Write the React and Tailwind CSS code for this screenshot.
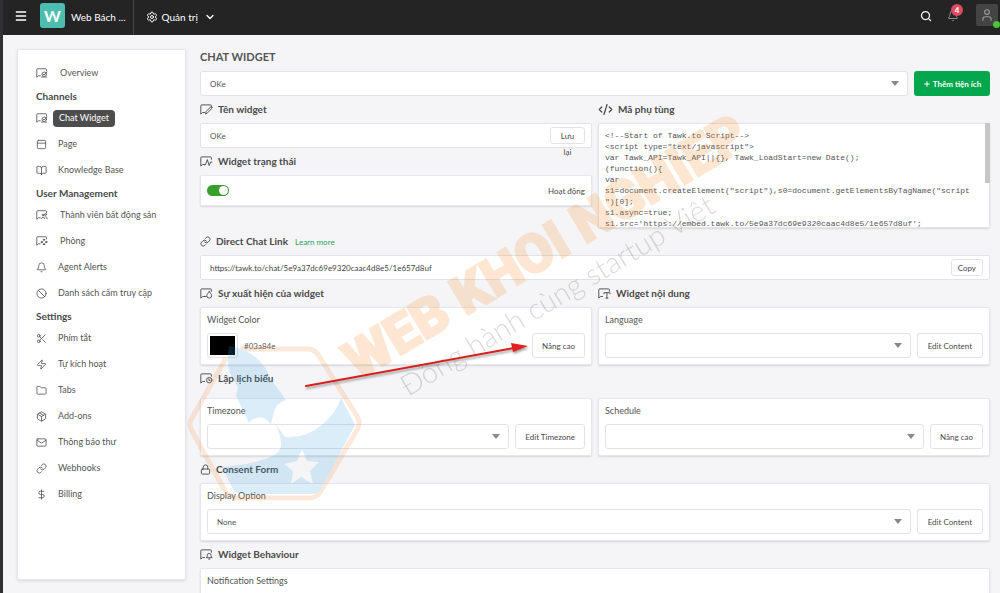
import { useState } from 'react'
import {
  Menu, Settings, ChevronDown, Search, Bell, User, PanelTop, BookOpen, Ban,
  Scissors, Zap, Folder, Package, Mail, Link, DollarSign, Lock, CodeXml, Plus,
} from 'lucide-react'

const SCRIPT = `<!--Start of Tawk.to Script-->
<script type="text/javascript">
var Tawk_API=Tawk_API||{}, Tawk_LoadStart=new Date();
(function(){
var s1=document.createElement("script"),s0=document.getElementsByTagName("script")[0];
s1.async=true;
s1.src='https://embed.tawk.to/5e9a37dc69e9320caac4d8e5/1e657d8uf';
s1.charset='UTF-8';
s1.setAttribute('crossorigin','*');
s0.parentNode.insertBefore(s1,s0);
})();
</script>
<!--End of Tawk.to Script-->`

// Chat bubble outline, the small glyph goes in its lower right corner
function BubbleIcon({ children, small }) {
  return (
    <svg
      viewBox="0 0 24 20"
      className={small ? 'w-3 h-[10px] shrink-0' : 'w-[13px] h-[11px] shrink-0'}
      fill="none"
      stroke="currentColor"
      strokeWidth="1.700"
      strokeLinejoin="round"
      strokeLinecap="round"
    >
      <path d="M21 6V3a1.500 1.500 0 0 0-1.500-1.500H3A1.500 1.500 0 0 0 1.500 3v15.500L5 15.500h3.500" />
      {children}
    </svg>
  )
}

const EyeGlyph = () => (
  <>
    <circle cx="16.500" cy="12.500" r="4.500" />
    <path d="M14.500 12.500l1.500 1.500 6-6M11 18h10" />
  </>
)
const PeopleGlyph = () => (
  <>
    <circle cx="14" cy="10" r="1.800" />
    <circle cx="19" cy="9" r="1.800" />
    <path d="M10.500 17c.5-3 6.500-3 7 0M18 13.500c2-.5 4 .5 4.500 4" />
  </>
)
const NodesGlyph = () => (
  <>
    <circle cx="16" cy="7.500" r="1.300" fill="currentColor" />
    <circle cx="11.500" cy="12" r="1.300" fill="currentColor" />
    <circle cx="20.500" cy="12" r="1.300" fill="currentColor" />
    <circle cx="16" cy="16.500" r="1.300" fill="currentColor" />
  </>
)
const PencilGlyph = () => <path d="M10.500 17.500l1-4L20.500 4.500l2.500 2.500-9 9z" />
const PulseGlyph = () => <path d="M8 16h2l3.500-9.500 3.500 11 2.500-6.500H22" />
const DropGlyph = () => <path d="M17 6.500c2 3 4.500 5 4.500 7.500a4.500 4.500 0 0 1-9 0c0-2.500 2.500-4.500 4.500-7.500zM8 15.500h3" />
const TextGlyph = () => <path d="M11 10.500V8.500h11v2M16.500 8.500v10M14.500 18.500h4" />
const ClockGlyph = () => (
  <>
    <circle cx="17" cy="13" r="5" />
    <path d="M16.500 10.500V13.500h2" />
  </>
)
const BellGlyph = () => <path d="M12 15.500c1.500-1 1.500-2.500 1.500-4a3.500 3.500 0 0 1 7 0c0 1.500 0 3 1.500 4zM16 18.500h2" />

const NAV = [
  { label: 'Overview', glyph: EyeGlyph },
  { heading: 'Channels' },
  { label: 'Chat Widget', glyph: EyeGlyph, active: true },
  { label: 'Page', icon: PanelTop },
  { label: 'Knowledge Base', icon: BookOpen },
  { heading: 'User Management' },
  { label: 'Thành viên bất động sản', glyph: PeopleGlyph },
  { label: 'Phòng', glyph: NodesGlyph },
  { label: 'Agent Alerts', icon: Bell },
  { label: 'Danh sách cấm truy cập', icon: Ban },
  { heading: 'Settings' },
  { label: 'Phím tắt', icon: Scissors },
  { label: 'Tự kích hoạt', icon: Zap },
  { label: 'Tabs', icon: Folder },
  { label: 'Add-ons', icon: Package },
  { label: 'Thông báo thư', icon: Mail },
  { label: 'Webhooks', icon: Link },
  { label: 'Billing', icon: DollarSign },
]

function NavItem({ item }) {
  if (item.heading) {
    return <li className="h-[19px] pt-0.5 flex items-center text-[10px] font-bold text-[#4a4a4a]">{item.heading}</li>
  }
  const Icon = item.icon
  const Glyph = item.glyph
  return (
    <li>
      <a href="#" className="h-[26px] flex items-center text-[9px] text-[#555]">
        <span className="w-[22px] shrink-0">
          {Icon ? <Icon size={11} strokeWidth={1.800} /> : <BubbleIcon small><Glyph /></BubbleIcon>}
        </span>
        {item.active ? (
          <span className="-ml-[5px] px-1.5 h-[17px] flex items-center rounded bg-[#4d4d4d] text-white">{item.label}</span>
        ) : (
          <span className={Glyph ? 'pl-0.5' : ''}>{item.label}</span>
        )}
      </a>
    </li>
  )
}

function SectionTitle({ icon, children, extra, className = '' }) {
  return (
    <div className={`h-[27px] flex items-center text-[#4a4a4a] ${className}`}>
      {icon}
      <h2 className="ml-[5px] text-[10px] font-bold">{children}</h2>
      {extra}
    </div>
  )
}

function Card({ children, className = '' }) {
  return (
    <div className={`bg-white rounded-xs border border-[#e6e7ec] shadow-[0_1px_2px_rgba(0,0,0,0.12)] ${className}`}>
      {children}
    </div>
  )
}

function Select({ id, value = '', label }) {
  return (
    <div className="relative flex-1 min-w-0">
      <select
        id={id}
        aria-label={label}
        className="block w-full h-[25px] pl-[9px] pr-6 appearance-none bg-white border border-[#e2e3e8] rounded-[3px] text-[8px] text-[#555]"
      >
        <option>{value}</option>
      </select>
      <svg viewBox="0 0 8 5" className="absolute right-[9px] top-[10px] w-2 h-[5px] pointer-events-none" fill="#8a8a8a">
        <path d="M0 0h8L4 5z" />
      </svg>
    </div>
  )
}

function OutlineButton({ children, className = 'h-[25px] px-2.5' }) {
  return (
    <button className={`shrink-0 bg-white border border-[#e2e3e8] rounded-[3px] text-[8px] text-[#4a4a4a] ${className}`}>
      {children}
    </button>
  )
}

function FieldCard({ id, label, value, button, buttonClass }) {
  return (
    <Card className="p-1.5">
      <label htmlFor={id} className="block mb-[7px] text-[9px] leading-3 text-[#555]">{label}</label>
      <div className="flex gap-1.5">
        <Select id={id} value={value} />
        <OutlineButton className={buttonClass}>{button}</OutlineButton>
      </div>
    </Card>
  )
}

function Header() {
  return (
    <header className="h-[35px] shrink-0 flex bg-[#242424] text-white">
      <button aria-label="Menu" className="ml-[11px] w-[26px] h-8 flex items-center">
        <Menu size={14} strokeWidth={2.500} />
      </button>
      <div className="mt-[3px] w-[25px] h-[25px] flex items-center justify-center rounded-[3px] bg-[#4dbdb0] text-base font-bold">W</div>
      <div className="ml-1.5 pr-[7px] h-full flex items-center pb-px border-r border-[#454545] text-[10px]">Web Bách ...</div>
      <button className="ml-3 h-8 pt-0.5 flex items-center gap-1 text-[10px]">
        <Settings size={12} strokeWidth={2} />
        Quản trị
        <ChevronDown size={12} strokeWidth={2.500} className="ml-0.5" />
      </button>
      <div className="ml-auto pr-0.5 flex">
        <button aria-label="Search" className="h-8 flex items-center mr-[15px]">
          <Search size={12} strokeWidth={2.500} />
        </button>
        <button aria-label="Notifications" className="relative h-8 flex items-center mr-[17px] text-[#8c8c8c]">
          <Bell size={12} strokeWidth={2} />
          <span className="absolute top-1 -right-1 w-3 h-3 flex items-center justify-center rounded-full bg-[#e04a5f] text-[8px] font-bold text-white">4</span>
        </button>
        <button aria-label="Profile" className="relative mt-1 w-[22px] h-[22px] flex items-center justify-center rounded-xs bg-[#444] text-[#999]">
          <User size={14} strokeWidth={2} />
          <span className="absolute -right-0.5 -bottom-0.5 w-[7px] h-[7px] rounded-full bg-[#4cc33a]" />
        </button>
      </div>
    </header>
  )
}

function Watermark() {
  return (
    <svg className="absolute left-[177px] top-[90px] w-[590px] h-[430px] pointer-events-none" viewBox="178 90 590 430" aria-hidden="true">
      {/* Badge */}
      <g opacity="0.19">
        <path
          d="M238 349h68q7 0 11 7l38 60q4 7 0 14l-36 61q-4 7-12 7h-73q-7 0-11-7l-33-60q-4-7 0-13l34-60"
          fill="none" stroke="#f08a3c" strokeWidth="5" strokeLinejoin="round"
        />
        <path
          fill="#3a9fe0"
          d="M227 346Q258 351 268 378L284 400Q274 403 272 412L269 424L262 418Q252 416 247 423L234 396L236 387Q222 370 227 346z"
        />
        <path
          fill="#3a9fe0"
          fillRule="evenodd"
          d="M273 424l10 13q20 2 38-13 13-11 18-26l14 27-34 64q-3 5-9 5h-70q-6 0-9-5l-11-22q27-2 43-8 16-5 16-14 0-11-6-21zM300 449l-5 12-13 3 9 7-2 13 10-7 12 7-3-13 9-9-12-1z"
        />
      </g>
      <text
        transform="translate(356 381) rotate(-31)"
        className="font-['Liberation_Sans_Narrow','Roboto',sans-serif] font-black text-[54px]"
        fill="#f5923a"
        stroke="#f5923a"
        strokeWidth="2"
        opacity="0.22"
      >
        WEB KHOI NGHIEP
      </text>
      <text
        transform="translate(406 397) rotate(-31)"
        className="font-['Lato',sans-serif] font-light text-[29px]"
        fill="#555"
        fillOpacity="0.22"
      >
        Đồng hành cùng startup Việt
      </text>
    </svg>
  )
}

function Arrow() {
  return (
    <svg
      className="absolute left-[295px] top-[335px] w-[235px] h-[60px] pointer-events-none drop-shadow-[1px_2px_1px_rgba(0,0,0,0.35)]"
      viewBox="298 335 235 60"
      aria-hidden="true"
    >
      <path d="M306 386L514 348" stroke="#d8201c" strokeWidth="2" strokeLinecap="round" />
      <path d="M528 346l-17-3 2 9z" fill="#e0201c" />
    </svg>
  )
}

export default function App() {
  const [enabled, setEnabled] = useState(true)

  return (
    <div className="relative h-screen overflow-hidden flex flex-col bg-[#f5f5f8] border-l-[3px] border-[#303036] font-['Lato',sans-serif]">
      <Header />

      <div className="flex-1 min-h-0 flex pl-3.5 pr-2.5 gap-3.5">
        {/* Sidebar */}
        <nav className="w-[169px] shrink-0 mt-3.5 mb-[13px] pl-[18px] pt-2.5 bg-white rounded-xs border border-[#e6e7ec] shadow-[0_1px_3px_rgba(0,0,0,0.12)]">
          <ul>
            {NAV.map(item => <NavItem key={item.label || item.heading} item={item} />)}
          </ul>
        </nav>

        {/* Content */}
        <main className="flex-1 min-w-0">
          <h1 className="mt-3.5 mb-1.5 text-[11px] leading-4 font-bold text-[#555]">CHAT WIDGET</h1>
          <div className="flex gap-1.5">
            <Select label="Widget" value="OKe" />
            <button className="shrink-0 w-[76px] h-[25px] flex items-center justify-center gap-0.5 rounded-[3px] bg-[#03a84e] text-[8px] font-bold text-white">
              <Plus size={8} strokeWidth={3} />
              Thêm tiện ích
            </button>
          </div>

          <div className="grid grid-cols-2 gap-x-1.5">
            <div>
              <SectionTitle icon={<BubbleIcon><PencilGlyph /></BubbleIcon>}>Tên widget</SectionTitle>
              <div className="h-[25px] flex pr-1.5 bg-white border border-[#e2e3e8] rounded-xs">
                <input aria-label="Tên widget" defaultValue="OKe" className="flex-1 min-w-0 pl-[9px] text-[8px] text-[#555]" />
                <OutlineButton className="mt-[3px] w-[35px] h-[17px] px-2 flex items-start justify-center leading-4">Lưu lại</OutlineButton>
              </div>
              <SectionTitle icon={<BubbleIcon><PulseGlyph /></BubbleIcon>}>Widget trạng thái</SectionTitle>
              <Card className="h-[31px] px-1.5 flex items-center justify-between">
                <input
                  id="status"
                  type="checkbox"
                  role="switch"
                  checked={enabled}
                  onChange={e => setEnabled(e.target.checked)}
                  className="appearance-none w-[22px] h-[11px] p-px flex rounded-full bg-[#b5b5b5] checked:bg-[#37a02c] checked:justify-end before:block before:w-[9px] before:h-[9px] before:rounded-full before:bg-white"
                />
                <label htmlFor="status" className="text-[8px] text-[#4a4a4a]">Hoạt động</label>
              </Card>
            </div>
            <div>
              <SectionTitle icon={<CodeXml size={15} strokeWidth={2} />}>Mã phụ tùng</SectionTitle>
              <div className="relative">
                <textarea
                  readOnly
                  aria-label="Mã phụ tùng"
                  value={SCRIPT}
                  className="block w-full h-[105px] pl-1.5 pr-[18px] pt-1.5 resize-none [scrollbar-width:none] bg-white border border-[#e2e3e8] rounded-xs shadow-[0_1px_2px_rgba(0,0,0,0.12)] font-['Liberation_Mono',monospace] text-[8px] leading-[11px] text-[#555]"
                />
                <span className="absolute top-0 right-0 w-[5px] h-[60px] bg-[#c6c6c6]" />
              </div>
            </div>
          </div>

          <SectionTitle
            icon={<Link size={11} strokeWidth={2} />}
            extra={<a href="#" className="ml-[7px] text-[8px] text-[#2aa35c]">Learn more</a>}
          >
            Direct Chat Link
          </SectionTitle>
          <div className="h-[25px] flex items-center pr-1.5 bg-white border border-[#e2e3e8] rounded-xs">
            <input
              readOnly
              aria-label="Direct Chat Link"
              value="https://tawk.to/chat/5e9a37dc69e9320caac4d8e5/1e657d8uf"
              className="flex-1 min-w-0 pl-[9px] text-[8px] text-[#444]"
            />
            <OutlineButton className="h-[17px] px-1.5">Copy</OutlineButton>
          </div>

          <div className="grid grid-cols-2 gap-x-1.5">
            <div>
              <SectionTitle icon={<BubbleIcon><DropGlyph /></BubbleIcon>}>Sự xuất hiện của widget</SectionTitle>
              <Card className="p-1.5">
                <div className="mb-[7px] text-[9px] leading-3 text-[#555]">Widget Color</div>
                <div className="flex items-center">
                  <button aria-label="Widget Color" className="w-[31px] h-[25px] p-0.5 bg-white border border-[#e2e3e8] rounded-[3px]">
                    <span className="block w-full h-full bg-black" />
                  </button>
                  <span className="ml-1.5 text-[8px] text-[#555]">#03a84e</span>
                  <OutlineButton className="ml-auto h-[25px] px-[9px]">Nâng cao</OutlineButton>
                </div>
              </Card>
            </div>
            <div>
              <SectionTitle icon={<BubbleIcon><TextGlyph /></BubbleIcon>}>Widget nội dung</SectionTitle>
              <FieldCard id="language" label="Language" button="Edit Content" />
            </div>
          </div>

          <SectionTitle className="mb-1.5" icon={<BubbleIcon><ClockGlyph /></BubbleIcon>}>Lập lịch biểu</SectionTitle>
          <div className="grid grid-cols-2 gap-x-1.5">
            <FieldCard id="timezone" label="Timezone" button="Edit Timezone" buttonClass="h-[25px] px-[9px]" />
            <FieldCard id="schedule" label="Schedule" button="Nâng cao" buttonClass="h-[25px] px-[9px]" />
          </div>

          <SectionTitle icon={<Lock size={11} strokeWidth={2} />}>Consent Form</SectionTitle>
          <FieldCard id="display" label="Display Option" value="None" button="Edit Content" />

          <SectionTitle icon={<BubbleIcon><BellGlyph /></BubbleIcon>}>Widget Behaviour</SectionTitle>
          <Card className="h-[58px] p-1.5">
            <div className="text-[9px] leading-3 text-[#555]">Notification Settings</div>
          </Card>
        </main>
      </div>

      <Watermark />
      <Arrow />
    </div>
  )
}
